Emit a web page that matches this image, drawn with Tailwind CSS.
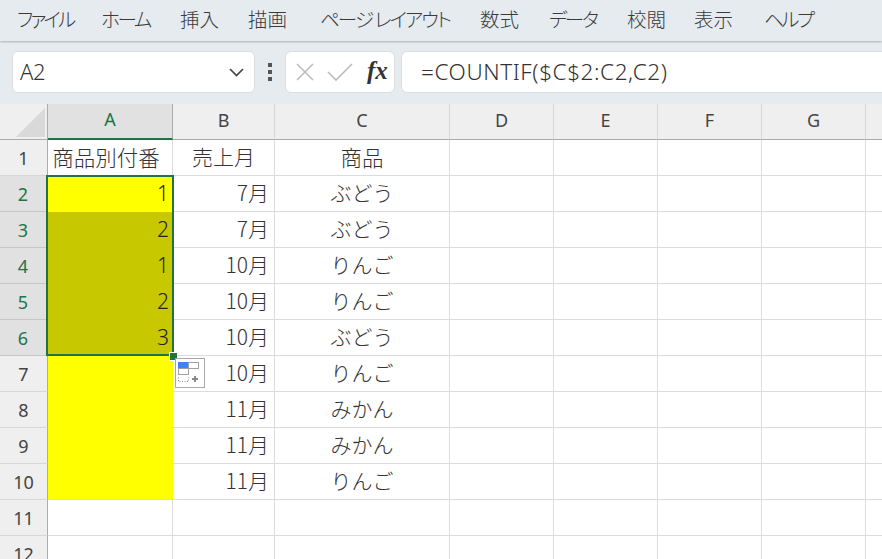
<!DOCTYPE html>
<html lang="ja">
<head>
<meta charset="utf-8">
<script src="https://cdn.jsdelivr.net/npm/@tailwindcss/browser@4"></script>
</head>
<body class="w-[882px] h-[559px] overflow-hidden bg-white font-['Noto_Sans','Noto_Sans_CJK_JP',sans-serif] text-[#333]">
<nav class="h-[41px] bg-[#e6ebf0] flex items-center text-[19.5px] pl-[17px] pb-[3px] shadow-[0_1px_2px_rgba(0,0,0,0.25)] relative z-10 text-[#3a3a3a] font-['Noto_Sans_CJK_JP',sans-serif] font-light whitespace-nowrap [font-feature-settings:'palt']">
  <span class="w-[84px] tracking-[-2.8px]">ファイル</span>
  <span class="w-[79px] tracking-[-2.3px]">ホーム</span>
  <span class="w-[68px]">挿入</span>
  <span class="w-[72px]">描画</span>
  <span class="w-[160px] tracking-[-1.9px]">ページ レイアウト</span>
  <span class="w-[69px]">数式</span>
  <span class="w-[78px] tracking-[-2.3px]">データ</span>
  <span class="w-[67px]">校閲</span>
  <span class="w-[70px]">表示</span>
  <span class="tracking-[-2.5px]">ヘルプ</span>
</nav>
<div class="h-[63px] bg-[#e6ebef] flex items-center pl-[12px] pb-[2px]">
  <div class="w-[243px] h-[42px] bg-white rounded-[6px] border border-[#dcdfe2] flex items-center justify-between pl-[7px] pr-[4px] text-[22px] tracking-[-0.5px] font-light text-[#333]">
    <span>A2</span>
    <svg width="26" height="26" viewBox="0 0 26 26" fill="none" stroke="#444" stroke-width="1.7"><path d="M6 10l6.500 6.500L19 10"/></svg>
  </div>
  <div class="w-[30px] flex flex-col items-center gap-[3px]">
    <i class="block w-[4px] h-[4px] bg-[#555]"></i><i class="block w-[4px] h-[4px] bg-[#555]"></i><i class="block w-[4px] h-[4px] bg-[#555]"></i>
  </div>
  <div class="w-[110px] h-[42px] bg-white rounded-[6px] border border-[#dcdfe2] flex items-center pl-[9px] relative">
    <svg width="20" height="20" viewBox="0 0 20 20" fill="none" stroke="#bcbcbc" stroke-width="1.6"><path d="M2 2l16 16M18 2L2 18"/></svg>
    <svg class="ml-[12px]" width="26" height="20" viewBox="0 0 26 20" fill="none" stroke="#bcbcbc" stroke-width="1.6"><path d="M1 10l8 8L25 2"/></svg>
    <span class="absolute left-[81px] top-[1px] font-['Liberation_Serif',serif] italic font-bold text-[25px] leading-[36px] text-[#333]">fx</span>
  </div>
  <div class="ml-[6px] flex-1 h-[42px] bg-white rounded-l-[6px] border border-r-0 border-[#dcdfe2] flex items-center pl-[19px] text-[22.5px] font-light tracking-[0.58px] text-[#333] whitespace-nowrap">=COUNTIF($C$2:C2,C2)</div>
</div>
<div class="relative grid grid-cols-[48px_125px_102px_175px_104px_104px_104px_104px_17px] grid-rows-[36px_36px_36px_36px_36px_36px_36px_36px_36px_36px_36px_36px_23px] h-[455px] overflow-hidden text-[20px] leading-none">
  <div class="bg-[#efefef] border-r border-b border-[#ababab] flex items-end justify-end pr-[2px] pb-[2px]"><svg width="29" height="29" viewBox="0 0 29 29"><path d="M29 0V29H0Z" fill="#d9d9d9"/></svg></div>
  <div class="bg-[#e1e1e1] border-r border-[#ababab] border-b-2 border-b-[#217346] flex items-center justify-center pb-[4px] text-[#217346] text-[18px]">A</div>
  <div class="bg-[#efefef] border-r border-b border-r-[#d6d6d6] border-b-[#ababab] flex items-center justify-center pb-[4px] text-[#444] text-[18px]">B</div>
  <div class="bg-[#efefef] border-r border-b border-r-[#d6d6d6] border-b-[#ababab] flex items-center justify-center pb-[4px] text-[#444] text-[18px]">C</div>
  <div class="bg-[#efefef] border-r border-b border-r-[#d6d6d6] border-b-[#ababab] flex items-center justify-center pb-[4px] text-[#444] text-[18px]">D</div>
  <div class="bg-[#efefef] border-r border-b border-r-[#d6d6d6] border-b-[#ababab] flex items-center justify-center pb-[4px] text-[#444] text-[18px]">E</div>
  <div class="bg-[#efefef] border-r border-b border-r-[#d6d6d6] border-b-[#ababab] flex items-center justify-center pb-[4px] text-[#444] text-[18px]">F</div>
  <div class="bg-[#efefef] border-r border-b border-r-[#d6d6d6] border-b-[#ababab] flex items-center justify-center pb-[4px] text-[#444] text-[18px]">G</div>
  <div class="bg-[#efefef] border-b border-b-[#ababab]"></div>

  <div class="bg-[#efefef] border-r border-b border-r-[#ababab] border-b-[#d6d6d6] flex items-center justify-center text-[#444] text-[18px] pt-[1px]">1</div>
  <div class="border-r border-b border-[#dcdcdc] flex items-center justify-center pb-[2px] pr-[8px] text-[21.5px] font-['Noto_Sans_CJK_JP',sans-serif] font-light">商品別付番</div>
  <div class="border-r border-b border-[#dcdcdc] flex items-center justify-center pb-[2px] text-[21px] font-['Noto_Sans_CJK_JP',sans-serif] font-light">売上月</div>
  <div class="border-r border-b border-[#dcdcdc] flex items-center justify-center pb-[2px] text-[21.5px] font-['Noto_Sans_CJK_JP',sans-serif] font-light">商品</div>
  <div class="border-r border-b border-[#dcdcdc]"></div><div class="border-r border-b border-[#dcdcdc]"></div><div class="border-r border-b border-[#dcdcdc]"></div><div class="border-r border-b border-[#dcdcdc]"></div><div class="border-b border-[#dcdcdc]"></div>

  <div class="bg-[#e1e1e1] border-r-2 border-r-[#217346] border-b border-b-[#c6c6c6] flex items-center justify-center text-[#217346] text-[18px] pt-[1px]">2</div>
  <div class="bg-[#ffff00] flex items-center justify-end pr-[4px] pb-[2px] text-[21px] font-light text-[#222]">1</div>
  <div class="border-r border-b border-[#dcdcdc] flex items-center justify-end pr-[5px] pb-[2px] text-[21px] font-['Noto_Sans_CJK_JP',sans-serif] font-light">7月</div>
  <div class="border-r border-b border-[#dcdcdc] flex items-center justify-center pb-[2px] text-[21px] font-['Noto_Sans_CJK_JP',sans-serif] font-light">ぶどう</div>
  <div class="border-r border-b border-[#dcdcdc]"></div><div class="border-r border-b border-[#dcdcdc]"></div><div class="border-r border-b border-[#dcdcdc]"></div><div class="border-r border-b border-[#dcdcdc]"></div><div class="border-b border-[#dcdcdc]"></div>

  <div class="bg-[#e1e1e1] border-r-2 border-r-[#217346] border-b border-b-[#c6c6c6] flex items-center justify-center text-[#217346] text-[18px] pt-[1px]">3</div>
  <div class="bg-[#c8c800] flex items-center justify-end pr-[4px] pb-[2px] text-[21px] font-light text-[#222]">2</div>
  <div class="border-r border-b border-[#dcdcdc] flex items-center justify-end pr-[5px] pb-[2px] text-[21px] font-['Noto_Sans_CJK_JP',sans-serif] font-light">7月</div>
  <div class="border-r border-b border-[#dcdcdc] flex items-center justify-center pb-[2px] text-[21px] font-['Noto_Sans_CJK_JP',sans-serif] font-light">ぶどう</div>
  <div class="border-r border-b border-[#dcdcdc]"></div><div class="border-r border-b border-[#dcdcdc]"></div><div class="border-r border-b border-[#dcdcdc]"></div><div class="border-r border-b border-[#dcdcdc]"></div><div class="border-b border-[#dcdcdc]"></div>

  <div class="bg-[#e1e1e1] border-r-2 border-r-[#217346] border-b border-b-[#c6c6c6] flex items-center justify-center text-[#217346] text-[18px] pt-[1px]">4</div>
  <div class="bg-[#c8c800] flex items-center justify-end pr-[4px] pb-[2px] text-[21px] font-light text-[#222]">1</div>
  <div class="border-r border-b border-[#dcdcdc] flex items-center justify-end pr-[5px] pb-[2px] text-[21px] font-['Noto_Sans_CJK_JP',sans-serif] font-light">10月</div>
  <div class="border-r border-b border-[#dcdcdc] flex items-center justify-center pb-[2px] text-[21px] font-['Noto_Sans_CJK_JP',sans-serif] font-light">りんご</div>
  <div class="border-r border-b border-[#dcdcdc]"></div><div class="border-r border-b border-[#dcdcdc]"></div><div class="border-r border-b border-[#dcdcdc]"></div><div class="border-r border-b border-[#dcdcdc]"></div><div class="border-b border-[#dcdcdc]"></div>

  <div class="bg-[#e1e1e1] border-r-2 border-r-[#217346] border-b border-b-[#c6c6c6] flex items-center justify-center text-[#217346] text-[18px] pt-[1px]">5</div>
  <div class="bg-[#c8c800] flex items-center justify-end pr-[4px] pb-[2px] text-[21px] font-light text-[#222]">2</div>
  <div class="border-r border-b border-[#dcdcdc] flex items-center justify-end pr-[5px] pb-[2px] text-[21px] font-['Noto_Sans_CJK_JP',sans-serif] font-light">10月</div>
  <div class="border-r border-b border-[#dcdcdc] flex items-center justify-center pb-[2px] text-[21px] font-['Noto_Sans_CJK_JP',sans-serif] font-light">りんご</div>
  <div class="border-r border-b border-[#dcdcdc]"></div><div class="border-r border-b border-[#dcdcdc]"></div><div class="border-r border-b border-[#dcdcdc]"></div><div class="border-r border-b border-[#dcdcdc]"></div><div class="border-b border-[#dcdcdc]"></div>

  <div class="bg-[#e1e1e1] border-r-2 border-r-[#217346] border-b border-b-[#c6c6c6] flex items-center justify-center text-[#217346] text-[18px] pt-[1px]">6</div>
  <div class="bg-[#c8c800] flex items-center justify-end pr-[4px] pb-[2px] text-[21px] font-light text-[#222]">3</div>
  <div class="border-r border-b border-[#dcdcdc] flex items-center justify-end pr-[5px] pb-[2px] text-[21px] font-['Noto_Sans_CJK_JP',sans-serif] font-light">10月</div>
  <div class="border-r border-b border-[#dcdcdc] flex items-center justify-center pb-[2px] text-[21px] font-['Noto_Sans_CJK_JP',sans-serif] font-light">ぶどう</div>
  <div class="border-r border-b border-[#dcdcdc]"></div><div class="border-r border-b border-[#dcdcdc]"></div><div class="border-r border-b border-[#dcdcdc]"></div><div class="border-r border-b border-[#dcdcdc]"></div><div class="border-b border-[#dcdcdc]"></div>

  <div class="bg-[#efefef] border-r border-b border-r-[#ababab] border-b-[#d6d6d6] flex items-center justify-center text-[#444] text-[18px] pt-[1px]">7</div>
  <div class="bg-[#ffff00]"></div>
  <div class="border-r border-b border-[#dcdcdc] flex items-center justify-end pr-[5px] pb-[2px] text-[21px] font-['Noto_Sans_CJK_JP',sans-serif] font-light">10月</div>
  <div class="border-r border-b border-[#dcdcdc] flex items-center justify-center pb-[2px] text-[21px] font-['Noto_Sans_CJK_JP',sans-serif] font-light">りんご</div>
  <div class="border-r border-b border-[#dcdcdc]"></div><div class="border-r border-b border-[#dcdcdc]"></div><div class="border-r border-b border-[#dcdcdc]"></div><div class="border-r border-b border-[#dcdcdc]"></div><div class="border-b border-[#dcdcdc]"></div>

  <div class="bg-[#efefef] border-r border-b border-r-[#ababab] border-b-[#d6d6d6] flex items-center justify-center text-[#444] text-[18px] pt-[1px]">8</div>
  <div class="bg-[#ffff00]"></div>
  <div class="border-r border-b border-[#dcdcdc] flex items-center justify-end pr-[5px] pb-[2px] text-[21px] font-['Noto_Sans_CJK_JP',sans-serif] font-light">11月</div>
  <div class="border-r border-b border-[#dcdcdc] flex items-center justify-center pb-[2px] text-[21px] font-['Noto_Sans_CJK_JP',sans-serif] font-light">みかん</div>
  <div class="border-r border-b border-[#dcdcdc]"></div><div class="border-r border-b border-[#dcdcdc]"></div><div class="border-r border-b border-[#dcdcdc]"></div><div class="border-r border-b border-[#dcdcdc]"></div><div class="border-b border-[#dcdcdc]"></div>

  <div class="bg-[#efefef] border-r border-b border-r-[#ababab] border-b-[#d6d6d6] flex items-center justify-center text-[#444] text-[18px] pt-[1px]">9</div>
  <div class="bg-[#ffff00]"></div>
  <div class="border-r border-b border-[#dcdcdc] flex items-center justify-end pr-[5px] pb-[2px] text-[21px] font-['Noto_Sans_CJK_JP',sans-serif] font-light">11月</div>
  <div class="border-r border-b border-[#dcdcdc] flex items-center justify-center pb-[2px] text-[21px] font-['Noto_Sans_CJK_JP',sans-serif] font-light">みかん</div>
  <div class="border-r border-b border-[#dcdcdc]"></div><div class="border-r border-b border-[#dcdcdc]"></div><div class="border-r border-b border-[#dcdcdc]"></div><div class="border-r border-b border-[#dcdcdc]"></div><div class="border-b border-[#dcdcdc]"></div>

  <div class="bg-[#efefef] border-r border-b border-r-[#ababab] border-b-[#d6d6d6] flex items-center justify-center text-[#444] text-[18px] pt-[1px]">10</div>
  <div class="bg-[#ffff00] border-b border-[#dcdcdc]"></div>
  <div class="border-r border-b border-[#dcdcdc] flex items-center justify-end pr-[5px] pb-[2px] text-[21px] font-['Noto_Sans_CJK_JP',sans-serif] font-light">11月</div>
  <div class="border-r border-b border-[#dcdcdc] flex items-center justify-center pb-[2px] text-[21px] font-['Noto_Sans_CJK_JP',sans-serif] font-light">りんご</div>
  <div class="border-r border-b border-[#dcdcdc]"></div><div class="border-r border-b border-[#dcdcdc]"></div><div class="border-r border-b border-[#dcdcdc]"></div><div class="border-r border-b border-[#dcdcdc]"></div><div class="border-b border-[#dcdcdc]"></div>

  <div class="bg-[#efefef] border-r border-b border-r-[#ababab] border-b-[#d6d6d6] flex items-center justify-center text-[#444] text-[18px] pt-[1px]">11</div>
  <div class="border-r border-b border-[#dcdcdc]"></div><div class="border-r border-b border-[#dcdcdc]"></div><div class="border-r border-b border-[#dcdcdc]"></div><div class="border-r border-b border-[#dcdcdc]"></div><div class="border-r border-b border-[#dcdcdc]"></div><div class="border-r border-b border-[#dcdcdc]"></div><div class="border-r border-b border-[#dcdcdc]"></div><div class="border-b border-[#dcdcdc]"></div>

  <div class="bg-[#efefef] border-r border-r-[#ababab] flex items-start justify-center text-[#444] text-[18px] pt-[9px]">12</div>
  <div class="border-r border-[#dcdcdc]"></div><div class="border-r border-[#dcdcdc]"></div><div class="border-r border-[#dcdcdc]"></div><div class="border-r border-[#dcdcdc]"></div><div class="border-r border-[#dcdcdc]"></div><div class="border-r border-[#dcdcdc]"></div><div class="border-r border-[#dcdcdc]"></div><div></div>

  <!-- selection outline, fill handle, quick-analysis button lie over the cells -->
  <div class="absolute left-[46px] top-[71px] w-[128px] h-[181px] border-2 border-[#217346] pointer-events-none"></div>
  <div class="absolute left-[169px] top-[248px] w-[7px] h-[7px] bg-[#217346] border border-white box-content"></div>
  <div class="absolute left-[175px] top-[254px] w-[30px] h-[30px] bg-white border border-[#a8a8a8] flex items-center justify-center">
    <svg width="24" height="22" viewBox="0 0 24 22" fill="none">
      <rect x="0.500" y="0.500" width="10" height="6" fill="#3b82f6" stroke="#3b82f6"/>
      <rect x="10.500" y="0.500" width="10" height="6" fill="#fff" stroke="#a0a0a0"/>
      <rect x="0.500" y="6.500" width="10" height="6" fill="#fff" stroke="#a0a0a0"/>
      <path d="M0.500 15.500v4h10v-4" stroke="#8a8a8a" stroke-dasharray="1 1.500"/>
      <path d="M14 17h6M17 14v6" stroke="#8a8a8a" stroke-width="2"/>
    </svg>
  </div>
</div>
</body>
</html>
